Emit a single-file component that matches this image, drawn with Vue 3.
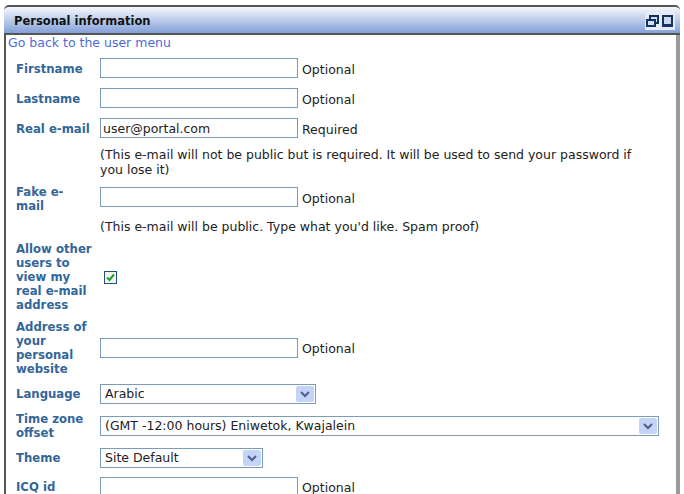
<template>
  <div class="page">
    <div class="panel">
      <div class="titlebar">
        <span class="title">Personal information</span>
        <div class="icons">
          <svg width="30" height="20" viewBox="0 0 30 20">
            <rect x="5" y="6" width="8" height="7" fill="#d5deef" stroke="#12335f" stroke-width="2" />
            <rect x="2" y="10" width="8" height="6" fill="#d5deef" stroke="#12335f" stroke-width="2" />
            <rect x="18" y="6" width="9" height="10" fill="#c9d8f0" stroke="#12335f" stroke-width="2" />
            <rect x="18" y="14" width="9" height="2" fill="#12335f" />
          </svg>
        </div>
      </div>
      <div class="body">
        <a class="back">Go back to the user menu</a>
        <form class="form" @submit.prevent>
          <template v-for="row in rows" :key="row.label">
            <div class="label" :class="{ nudge: row.nudge }">{{ row.label }}</div>
            <div class="field" :class="['f-' + row.type, { up: row.up, nudge: row.nudge }]">
              <template v-if="row.type === 'text'">
                <input class="input" type="text" :value="row.value" />
                <span class="note">{{ row.note }}</span>
              </template>
              <span v-else-if="row.type === 'check'" class="box">
                <svg width="11" height="11" viewBox="0 0 11 11">
                  <path d="M2 5.5 L4.5 8 L9 2.5" fill="none" stroke="#21a121" stroke-width="2" />
                </svg>
              </span>
              <div v-else class="select" :style="{ width: row.width + 'px' }">
                <span>{{ row.value }}</span>
                <span class="arrow">
                  <svg width="10" height="7" viewBox="0 0 10 7">
                    <path d="M1 1 L5 5 L9 1" fill="none" stroke="#4d6185" stroke-width="2" />
                  </svg>
                </span>
              </div>
            </div>
            <p v-if="row.hint" class="hint" :class="{ up: row.up }">{{ row.hint }}</p>
          </template>
        </form>
      </div>
    </div>
  </div>
</template>

<script setup>
const rows = [
  { label: 'Firstname', type: 'text', note: 'Optional', nudge: true },
  { label: 'Lastname', type: 'text', note: 'Optional', nudge: true },
  {
    label: 'Real e-mail',
    type: 'text',
    value: 'user@portal.com',
    note: 'Required',
    nudge: true,
    hint: "(This e-mail will not be public but is required. It will be used to send your password if you lose it)"
  },
  {
    label: 'Fake e-\nmail',
    type: 'text',
    note: 'Optional',
    up: true,
    nudge: true,
    hint: "(This e-mail will be public. Type what you'd like. Spam proof)"
  },
  { label: 'Allow other\nusers to\nview my\nreal e-mail\naddress', type: 'check' },
  { label: 'Address of\nyour\npersonal\nwebsite', type: 'text', note: 'Optional' },
  { label: 'Language', type: 'select', value: 'Arabic', width: 216 },
  { label: 'Time zone\noffset', type: 'select', value: '(GMT -12:00 hours) Eniwetok, Kwajalein', width: 559 },
  { label: 'Theme', type: 'select', value: 'Site Default', width: 163 },
  { label: 'ICQ id', type: 'text', note: 'Optional' }
]
</script>

<style>
html, body {
  margin: 0;
  background: #fff;
  overflow: hidden;
}
</style>

<style scoped>
.page {
  width: 684px;
  height: 494px;
  padding: 5px 4px 0 4px;
  box-sizing: border-box;
  overflow: hidden;
  font-family: "DejaVu Sans", Verdana, sans-serif;
  font-size: 12.5px;
  color: #222;
}
.panel {
  width: 676px;
  height: 489px;
  box-sizing: border-box;
  overflow: hidden;
}
.titlebar {
  height: 30px;
  box-sizing: border-box;
  border-top: 2px solid #555;
  border-bottom: 2px solid #555;
  border-radius: 5px 5px 0 0;
  background: linear-gradient(#f6f8fd, #83a0d8);
  display: flex;
  align-items: center;
  justify-content: space-between;
}
.title {
  margin-left: 10px;
  padding-top: 2px;
  font-size: 11.5px;
  font-weight: bold;
  color: #111;
}
.icons {
  width: 30px;
  height: 20px;
  margin-right: 5px;
  background: #e6ebf6;
}
.icons svg {
  display: block;
}
.body {
  height: 459px;
  box-sizing: border-box;
  border-left: 2px solid #555;
  border-right: 4px solid #9b9b9b;
  padding: 0 0 0 2px;
}
.back {
  display: block;
  color: #4e6bdc;
  line-height: 16px;
}
.form {
  display: grid;
  grid-template-columns: 84px 1fr;
  row-gap: 8px;
  margin-top: 6px;
  padding-left: 8px;
  align-items: center;
}
.label {
  font-size: 11.7px;
  font-weight: bold;
  color: #336699;
  line-height: 14px;
  white-space: pre-line;
}
.label.nudge {
  padding-top: 1px;
  margin-bottom: -1px;
}
.field {
  padding-right: 10px;
}
.f-text {
  display: flex;
  align-items: center;
  height: 22px;
}
.f-text.up {
  margin-top: -1px;
  margin-bottom: 1px;
}
.input {
  width: 198px;
  height: 20px;
  box-sizing: border-box;
  border: 1px solid #7a9cb8;
  padding: 0 2px;
  font: inherit;
  color: #222;
  outline: none;
}
.note {
  margin-left: 4px;
  line-height: 16px;
  padding-top: 1px;
  margin-bottom: -1px;
}
.nudge .note {
  padding-top: 2px;
  margin-bottom: -2px;
}
.hint {
  grid-column: 2;
  margin: 0 0 -1px 0;
  padding-right: 30px;
  line-height: 15px;
}
.hint.up {
  margin: -1px 0 0 0;
}
.box {
  display: block;
  width: 13px;
  height: 13px;
  margin-left: 4px;
  box-sizing: border-box;
  border: 1px solid #1c5180;
  background: #f3f3ef;
}
.box svg {
  display: block;
}
.select {
  position: relative;
  height: 20px;
  box-sizing: border-box;
  border: 1px solid #7a9cb8;
  padding-left: 4px;
  line-height: 18px;
}
.arrow {
  position: absolute;
  right: 1px;
  top: 1px;
  width: 18px;
  height: 16px;
  background: #c4d3f7;
  border-radius: 2px;
  display: flex;
  align-items: center;
  justify-content: center;
}
</style>
